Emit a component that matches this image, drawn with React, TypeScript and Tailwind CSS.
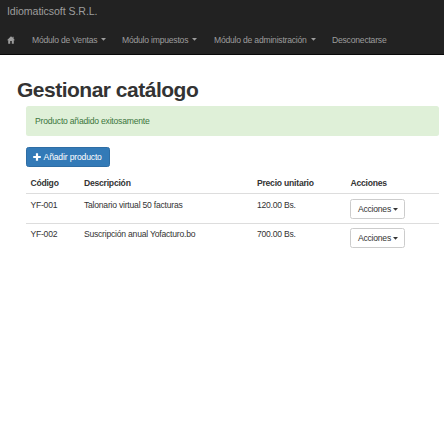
import type { ReactNode } from "react";

function Caret({ className = "" }: { className?: string }) {
  return (
    <svg className={`inline-block h-[3px] w-[5px] shrink-0 ${className}`} viewBox="0 0 5 3" fill="currentColor">
      <path d="M0 0h5L2.5 2.7z" />
    </svg>
  );
}

function NavItem({ className, children }: { className: string; children: ReactNode }) {
  return (
    <a className={`flex shrink-0 items-center whitespace-nowrap ${className}`}>
      {children}
    </a>
  );
}

function Navbar() {
  return (
    <nav className="h-[55px] border-b border-[#080808] bg-[#222] text-[#9d9d9d]">
      <div className="flex h-[23px] items-center pl-[7px] text-[10.6px] tracking-[-0.07px]">Idiomaticsoft S.R.L.</div>
      <div className="flex h-[34px] items-center pl-[7px]">
        <NavItem className="w-[25px]">
          <svg className="h-[8px] w-[8px]" viewBox="0 0 16 16" fill="currentColor">
            <path d="M8 0.3 0 8.4h2.4V15.5h4V10h3.2v5.5h4V8.4H16L13.2 5.5V1.5h-2v2z" />
          </svg>
        </NavItem>
        <NavItem className="w-[90px]">Módulo de Ventas<Caret className="ml-[4px]" /></NavItem>
        <NavItem className="w-[92px]">Módulo impuestos<Caret className="ml-[4px]" /></NavItem>
        <NavItem className="w-[118px]">Módulo de administración<Caret className="ml-[4px]" /></NavItem>
        <NavItem className="">Desconectarse</NavItem>
      </div>
    </nav>
  );
}

const products = [
  { code: "YF-001", name: "Talonario virtual 50 facturas", price: "120.00 Bs." },
  { code: "YF-002", name: "Suscripción anual Yofacturo.bo", price: "700.00 Bs." },
];

const columns = "grid grid-cols-[53.5px_173px_93.5px_1fr] pl-[4.4px]";

export default function App() {
  return (
    <div className="h-[425px] w-[444px] overflow-hidden bg-white font-['Liberation_Sans',Arial,sans-serif] text-[8.6px] tracking-[-0.22px] text-[#333]">
      <Navbar />
      <main className="pr-[5px] pl-[26px]">
        <h1 className="-ml-[9px] h-[51px] pt-[22px] text-[21px] leading-[26px] font-bold tracking-[-0.5px] whitespace-nowrap">Gestionar catálogo</h1>
        <div className="flex h-[30px] items-center rounded-[2.5px] bg-[#dff0d8] pt-px pl-[9px] text-[#3c763d]">
          Producto añadido exitosamente
        </div>
        <button className="mt-[11px] flex h-[20px] w-[83.5px] items-center rounded-[2.5px] border border-[#2e6da4] bg-[#337ab7] pl-[6px] tracking-[-0.17px] whitespace-nowrap text-white">
          <svg className="mr-[2.6px] h-[8px] w-[8px] shrink-0" viewBox="0 0 8 8" fill="currentColor">
            <path d="M2.9 0.2h2.2v2.7h2.7v2.2H5.1v2.7H2.9V5.1H0.2V2.9h2.7z" />
          </svg>
          <span className="pt-px">Añadir producto</span>
        </button>
        <div className="mt-[1px]">
          <div className={`${columns} h-[26px] items-center border-b border-[#ddd] pt-[5px] font-bold`}>
            <span>Código</span>
            <span>Descripción</span>
            <span>Precio unitario</span>
            <span>Acciones</span>
          </div>
          {products.map((product) => (
            <div key={product.code} className={`${columns} h-[30px] border-b border-[#ddd] pt-[5px] leading-[12px] last:border-b-0 last:pt-[4px]`}>
              <span>{product.code}</span>
              <span>{product.name}</span>
              <span>{product.price}</span>
              <button className="flex h-[20px] w-[55px] items-center rounded-[2.5px] border border-[#ccc] bg-white pl-[6.5px]">
                Acciones
                <Caret className="ml-[2px]" />
              </button>
            </div>
          ))}
        </div>
      </main>
    </div>
  );
}
